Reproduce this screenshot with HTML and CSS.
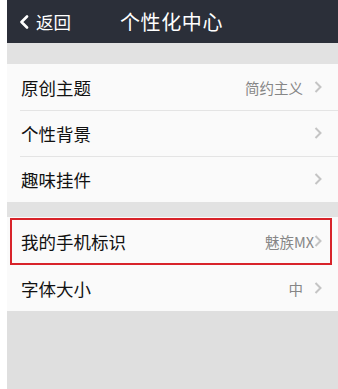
FILE: index.html
```html
<!DOCTYPE html>
<html lang="zh">
<head>
<meta charset="utf-8">
<link rel="stylesheet" href="styles.css">
</head>
<body>
<div class="app">
  <header class="topbar">
    <div class="back">
      <svg class="back-icon" width="10" height="14" viewBox="0 0 10 14"><path d="M8 1.5 L2.5 7 L8 12.5" fill="none" stroke="#fff" stroke-width="2.6" stroke-linecap="round" stroke-linejoin="round"/></svg>
      <span>返回</span>
    </div>
    <div class="title">个性化中心</div>
    <div></div>
  </header>
  <div class="band band-top"></div>
  <section class="group">
    <div class="row"><span class="label">原创主题</span><span class="value">简约主义</span><svg class="chev" width="8" height="12" viewBox="0 0 8 12"><path d="M1.5 1 L6.5 6 L1.5 11" fill="none" stroke="#c4c4c4" stroke-width="2"/></svg></div>
    <div class="row"><span class="label">个性背景</span><span class="value"></span><svg class="chev" width="8" height="12" viewBox="0 0 8 12"><path d="M1.5 1 L6.5 6 L1.5 11" fill="none" stroke="#c4c4c4" stroke-width="2"/></svg></div>
    <div class="row"><span class="label">趣味挂件</span><span class="value"></span><svg class="chev" width="8" height="12" viewBox="0 0 8 12"><path d="M1.5 1 L6.5 6 L1.5 11" fill="none" stroke="#c4c4c4" stroke-width="2"/></svg></div>
  </section>
  <div class="band band-mid"></div>
  <section class="group">
    <div class="row row-tall row-marked"><span class="label">我的手机标识</span><span class="value value-tight">魅族MX</span><svg class="chev" width="8" height="12" viewBox="0 0 8 12"><path d="M1.5 1 L6.5 6 L1.5 11" fill="none" stroke="#c4c4c4" stroke-width="2"/></svg></div>
    <div class="row"><span class="label">字体大小</span><span class="value">中</span><svg class="chev" width="8" height="12" viewBox="0 0 8 12"><path d="M1.5 1 L6.5 6 L1.5 11" fill="none" stroke="#c4c4c4" stroke-width="2"/></svg></div>
  </section>
  <div class="filler"></div>
</div>
</body>
</html>
```
FILE: styles.css
```css
html, body {
  margin: 0;
  padding: 0;
  background: #ffffff;
}
body {
  font-family: "Noto Sans CJK SC", "Noto Sans", sans-serif;
  width: 338px;
  height: 389px;
  overflow: hidden;
}
.app {
  margin-left: 7px;
  width: 331px;
  height: 389px;
  display: flex;
  flex-direction: column;
  background: #dfdfdf;
}
.topbar {
  height: 43px;
  background: #2b2f39;
  display: grid;
  grid-template-columns: 1fr auto 1fr;
  align-items: center;
  color: #ffffff;
}
.back {
  display: flex;
  align-items: center;
  padding-left: 12px;
  font-size: 17.5px;
  gap: 7px;
}
.back-icon {
  display: block;
}
.title {
  font-size: 20px;
  letter-spacing: 0.6px;
  line-height: 1;
  margin-left: -2px;
}
.band {
  background: #e2e2e2;
}
.band-top {
  height: 21px;
}
.band-mid {
  height: 15px;
}
.group {
  background: #fafafa;
}
.row {
  position: relative;
  height: 46px;
  display: flex;
  align-items: center;
  padding-left: 14px;
  padding-right: 16px;
}
.row + .row::before {
  content: "";
  position: absolute;
  left: 13px;
  right: 0;
  top: 0;
  height: 1px;
  background: #e4e4e4;
}
.row-tall {
  height: 48px;
}
.label {
  flex: 1;
  font-size: 17.5px;
  color: #111111;
}
.value {
  font-size: 14.5px;
  color: #868686;
  margin-right: 11px;
}
.value-tight {
  margin-right: 0;
}
.chev {
  display: block;
}
.row-marked::after {
  content: "";
  position: absolute;
  left: 3px;
  right: 6px;
  top: 1px;
  bottom: 0;
  border: 2px solid #d8232a;
}
.row-marked + .row::before {
  display: none;
}
.filler {
  flex: 1;
  background: #dfdfdf;
}
```
